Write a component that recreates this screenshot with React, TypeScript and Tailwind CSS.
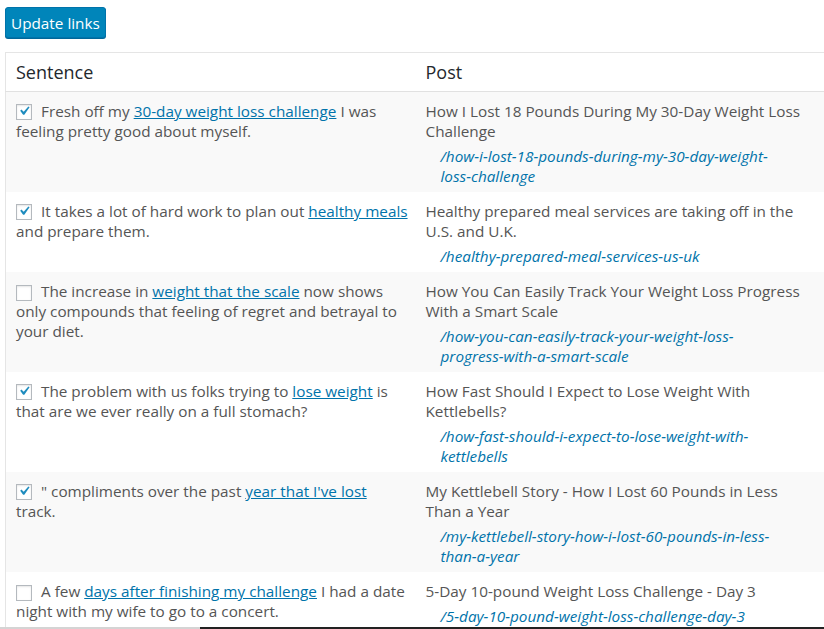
import React, { useState } from 'react';

type Row = {
    before: string;
    link: string;
    after: string;
    lines: string[];
    title: string[];
    slug: string[];
    checked: boolean;
};

const rows: Row[] = [
    {
        before: 'Fresh off my ',
        link: '30-day weight loss challenge',
        after: ' I was',
        lines: ['feeling pretty good about myself.'],
        title: ['How I Lost 18 Pounds During My 30-Day Weight Loss', 'Challenge'],
        slug: ['/how-i-lost-18-pounds-during-my-30-day-weight-', 'loss-challenge'],
        checked: true,
    },
    {
        before: 'It takes a lot of hard work to plan out ',
        link: 'healthy meals',
        after: '',
        lines: ['and prepare them.'],
        title: ['Healthy prepared meal services are taking off in the', 'U.S. and U.K.'],
        slug: ['/healthy-prepared-meal-services-us-uk'],
        checked: true,
    },
    {
        before: 'The increase in ',
        link: 'weight that the scale',
        after: ' now shows',
        lines: ['only compounds that feeling of regret and betrayal to', 'your diet.'],
        title: ['How You Can Easily Track Your Weight Loss Progress', 'With a Smart Scale'],
        slug: ['/how-you-can-easily-track-your-weight-loss-', 'progress-with-a-smart-scale'],
        checked: false,
    },
    {
        before: 'The problem with us folks trying to ',
        link: 'lose weight',
        after: ' is',
        lines: ['that are we ever really on a full stomach?'],
        title: ['How Fast Should I Expect to Lose Weight With', 'Kettlebells?'],
        slug: ['/how-fast-should-i-expect-to-lose-weight-with-', 'kettlebells'],
        checked: true,
    },
    {
        before: '" compliments over the past ',
        link: "year that I've lost",
        after: '',
        lines: ['track.'],
        title: ['My Kettlebell Story - How I Lost 60 Pounds in Less', 'Than a Year'],
        slug: ['/my-kettlebell-story-how-i-lost-60-pounds-in-less-', 'than-a-year'],
        checked: true,
    },
    {
        before: 'A few ',
        link: 'days after finishing my challenge',
        after: ' I had a date',
        lines: ['night with my wife to go to a concert.'],
        title: ['5-Day 10-pound Weight Loss Challenge - Day 3'],
        slug: ['/5-day-10-pound-weight-loss-challenge-day-3'],
        checked: false,
    },
];

const Check = ({ checked, onChange }: { checked: boolean; onChange: () => void }) => (
    <button
        onClick={onChange}
        className="inline-flex items-center justify-center w-4 h-4 mr-[9px] align-[-3px] bg-white border border-[#b4b9be] shadow-[inset_0_1px_2px_rgba(0,0,0,0.1)] overflow-visible"
    >
        {checked && (
            <svg width="18" height="18" viewBox="0 0 20 20" className="shrink-0 text-[#1e8cbe] -mt-[1px]">
                <path d="M14.83 4.89l1.34.94-5.81 8.38H9.02L5.78 9.67l1.34-1.25 2.57 2.4z" fill="currentColor" />
            </svg>
        )}
    </button>
);

export default function App() {
    const [checks, setChecks] = useState(rows.map(r => r.checked));

    return (
        <div className="relative w-[824px] h-[629px] overflow-hidden bg-white text-[#555] font-['Open_Sans','Noto_Sans',sans-serif]">
            <div className="pt-[7px] pl-[5px]">
                <button className="h-[31px] px-[5px] rounded-[3px] bg-[#0085ba] border border-[#0073aa] shadow-[0_1px_0_#006799] text-white text-[15.3px] leading-[28px]">
                    Update links
                </button>
            </div>

            <table className="mt-[14px] ml-[5px] w-[840px] border-collapse border border-[#e5e5e5] text-[15.3px] leading-[20px] table-fixed">
                <thead>
                    <tr className="border-b border-[#e1e1e1]">
                        <th className="w-[410px] h-[39px] px-[10px] text-left text-[18px] font-normal text-[#23282d]">Sentence</th>
                        <th className="px-[10px] text-left text-[18px] font-normal text-[#23282d]">Post</th>
                    </tr>
                </thead>
                <tbody>
                    {rows.map((r, i) => (
                        <tr key={i} className={i % 2 === 0 ? 'bg-[#f9f9f9]' : 'bg-white'}>
                            <td className="align-top px-[10px] pt-[9px] pb-[6px] whitespace-nowrap">
                                <Check
                                    checked={checks[i]}
                                    onChange={() => setChecks(c => c.map((v, j) => (j === i ? !v : v)))}
                                />
                                {r.before}
                                <a href="#" className="text-[#0073aa] underline">{r.link}</a>
                                {r.after}
                                {r.lines.map((l, k) => (
                                    <div key={k}>{l}</div>
                                ))}
                            </td>
                            <td className="align-top px-[10px] pt-[9px] pb-[6px] whitespace-nowrap">
                                <div>
                                    {r.title.map((t, k) => (
                                        <div key={k}>{t}</div>
                                    ))}
                                </div>
                                <div className="mt-[5px] pl-[15px] italic text-[#0073aa]">
                                    {r.slug.map((s, k) => (
                                        <div key={k}>{s}</div>
                                    ))}
                                </div>
                            </td>
                        </tr>
                    ))}
                </tbody>
            </table>

            <div className="absolute left-0 bottom-0 w-full h-[2px] flex">
                <div className="w-[200px] bg-[#d4d4d4]" />
                <div className="flex-1 bg-[#222]" />
            </div>
        </div>
    );
}
